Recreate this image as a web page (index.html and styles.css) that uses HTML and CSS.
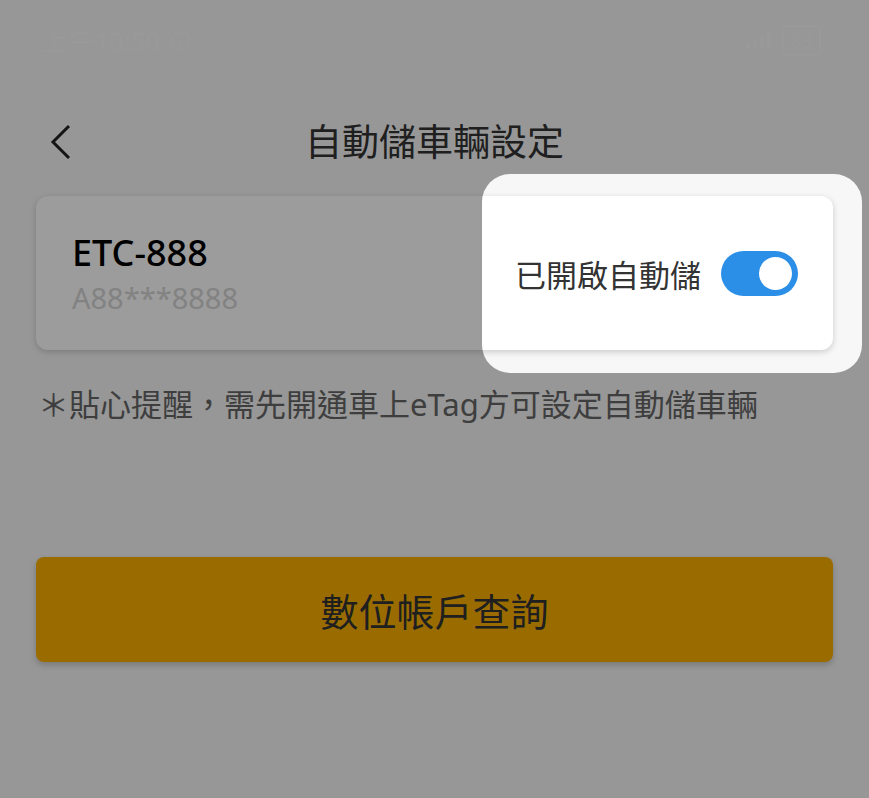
FILE: index.html
```html
<!DOCTYPE html>
<html lang="zh-Hant">
<head>
  <meta charset="UTF-8">
  <title>自動儲車輛設定</title>
  <link rel="stylesheet" href="styles.css">
</head>
<body>
  <div class="screen">
    <div class="status-bar">
      <span class="clock">上午10:50 ⊙</span>
      <span class="status-icons">
        <svg width="28" height="22" viewBox="0 0 28 22"><rect x="2" y="14" width="4" height="6" fill="currentColor"/><rect x="9" y="10" width="4" height="10" fill="currentColor"/><rect x="16" y="6" width="4" height="14" fill="currentColor"/><rect x="23" y="2" width="4" height="18" fill="currentColor"/></svg>
        <span class="battery">83</span>
      </span>
    </div>

    <header class="top-bar">
      <button class="back" type="button">
        <svg width="24" height="36" viewBox="0 0 24 36"><polyline points="19,2 3,18 19,34" fill="none" stroke="currentColor" stroke-width="3"/></svg>
      </button>
      <h1>自動儲車輛設定</h1>
    </header>

    <section class="car-card">
      <div class="car-info">
        <div class="car-name">ETC-888</div>
        <div class="car-plate">A88***8888</div>
      </div>
      <label class="auto-switch">
        <span>已開啟自動儲</span>
        <span class="toggle on"><span class="knob"></span></span>
      </label>
    </section>

    <p class="notice">＊貼心提醒，需先開通車上eTag方可設定自動儲車輛</p>

    <button class="query-btn" type="button">數位帳戶查詢</button>

    <!-- 新手導覽：聚焦在自動儲開關 -->
    <div class="guide-spot"></div>
  </div>
</body>
</html>
```

FILE: styles.css
```css
* {
  box-sizing: border-box;
}
body {
  margin: 0;
  font-family: "Noto Sans", "Noto Sans CJK TC", sans-serif;
  background-color: #f7f7f7;
}
.screen {
  position: relative;
  width: 869px;
  height: 798px;
  overflow: hidden;
  background-color: #f7f7f7;
}
.status-bar {
  height: 80px;
  padding: 0 48px 0 42px;
  display: flex;
  justify-content: space-between;
  align-items: center;
  color: #fafafa;
  font-size: 26px;
}
.status-icons {
  display: flex;
  align-items: center;
  gap: 10px;
}
.battery {
  border: 2px solid currentColor;
  border-radius: 4px;
  padding: 0 6px;
  font-size: 20px;
}
.top-bar {
  position: relative;
  height: 116px;
  display: flex;
  align-items: center;
  justify-content: center;
}
.back {
  position: absolute;
  left: 50px;
  top: 44px;
  border: none;
  background: none;
  padding: 0;
  color: #222;
}
.top-bar h1 {
  margin: 4px 0 0;
  font-size: 37px;
  font-weight: 400;
  color: #333;
}
.car-card {
  margin: 0 36px;
  height: 154px;
  background: #fff;
  border-radius: 12px;
  box-shadow: 0 2px 6px rgba(0, 0, 0, 0.18);
  display: flex;
  justify-content: space-between;
  align-items: center;
  padding: 0 35px 0 36px;
}
.car-info {
  margin-top: 6px;
}
.car-name {
  font-size: 36px;
  font-weight: 500;
  color: #000;
  line-height: 44px;
}
.car-plate {
  font-size: 29px;
  color: #d4d4d4;
  line-height: 46px;
}
.auto-switch {
  display: flex;
  align-items: center;
  gap: 20px;
  font-size: 31px;
  color: #333;
}
.toggle {
  width: 77px;
  height: 45px;
  border-radius: 23px;
  background: #2b8fe8;
  padding: 6px;
  display: flex;
  justify-content: flex-end;
}
.knob {
  width: 33px;
  height: 33px;
  border-radius: 50%;
  background: #fff;
}
.notice {
  margin: 30px 38px 0;
  font-size: 31px;
  color: #666;
  line-height: 48px;
}
.query-btn {
  display: block;
  margin: 129px 36px 0;
  width: 797px;
  height: 105px;
  border: none;
  border-radius: 8px;
  background: #fcb100;
  box-shadow: 0 3px 6px rgba(0, 0, 0, 0.2);
  font-family: inherit;
  font-size: 38px;
  color: #333;
}
.guide-spot {
  position: absolute;
  left: 482px;
  top: 174px;
  width: 380px;
  height: 199px;
  border-radius: 28px;
  box-shadow: 0 0 0 1200px rgba(0, 0, 0, 0.39);
  pointer-events: none;
}
```
